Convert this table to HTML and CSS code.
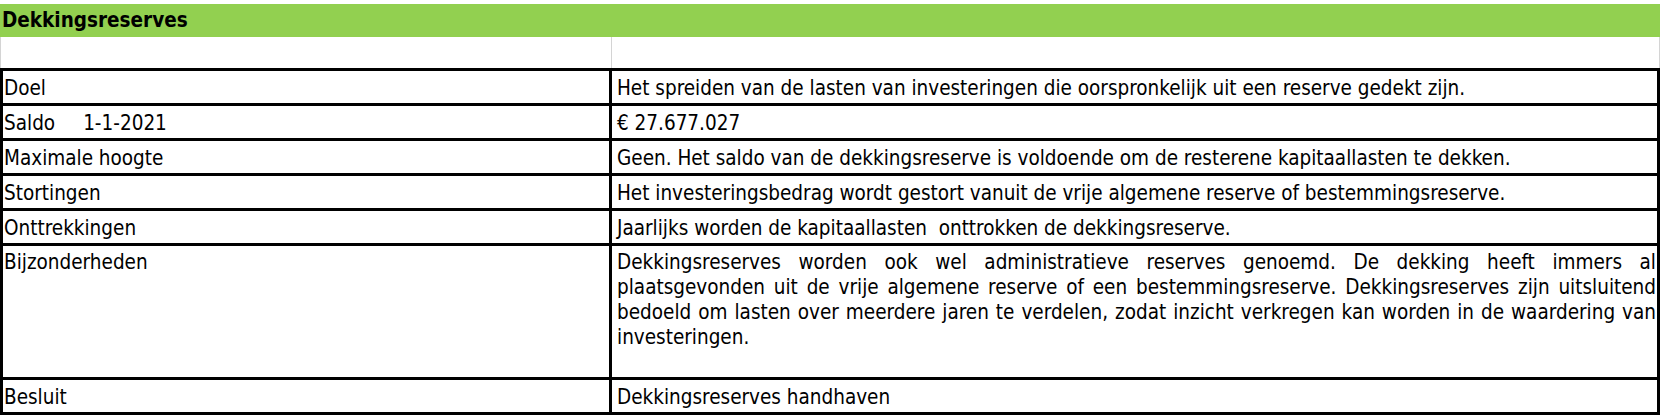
FILE: index.html
```html
<!DOCTYPE html>
<html lang="nl">
<head>
<meta charset="utf-8">
<title>Dekkingsreserves</title>
<link rel="stylesheet" href="styles.css">
</head>
<body>
<div class="sheet">
  <div class="title">Dekkingsreserves</div>
  <div class="spacer">
    <div class="spacer-cell spacer-left"></div>
    <div class="spacer-cell spacer-right"></div>
  </div>
  <table class="info">
    <colgroup>
      <col class="col-label">
      <col class="col-value">
    </colgroup>
    <tbody>
      <tr>
        <td class="label">Doel</td>
        <td class="value">Het spreiden van de lasten van investeringen die oorspronkelijk uit een reserve gedekt zijn.</td>
      </tr>
      <tr>
        <td class="label">Saldo<span class="date">1-1-2021</span></td>
        <td class="value">€ 27.677.027</td>
      </tr>
      <tr>
        <td class="label">Maximale hoogte</td>
        <td class="value">Geen. Het saldo van de dekkingsreserve is voldoende om de resterene kapitaallasten te dekken.</td>
      </tr>
      <tr>
        <td class="label">Stortingen</td>
        <td class="value">Het investeringsbedrag wordt gestort vanuit de vrije algemene reserve of bestemmingsreserve.</td>
      </tr>
      <tr>
        <td class="label">Onttrekkingen</td>
        <td class="value">Jaarlijks worden de kapitaallasten&nbsp; onttrokken de dekkingsreserve.</td>
      </tr>
      <tr class="tall">
        <td class="label">Bijzonderheden</td>
        <td class="value justify">Dekkingsreserves worden ook wel administratieve reserves genoemd. De dekking heeft immers al plaatsgevonden uit de vrije algemene reserve of een bestemmingsreserve. Dekkingsreserves zijn uitsluitend bedoeld om lasten over meerdere jaren te verdelen, zodat inzicht verkregen kan worden in de waardering van investeringen.</td>
      </tr>
      <tr>
        <td class="label">Besluit</td>
        <td class="value">Dekkingsreserves handhaven</td>
      </tr>
    </tbody>
  </table>
</div>
</body>
</html>
```

FILE: styles.css
```css
* {
  box-sizing: border-box;
}

html, body {
  margin: 0;
  padding: 0;
  background: #ffffff;
}

body {
  font-family: "DejaVu Sans Condensed", "DejaVu Sans", Verdana, sans-serif;
  color: #000000;
}

.sheet {
  width: 1662px;
  padding-top: 4px;
}

.title {
  width: 1660px;
  height: 33px;
  background: #92d050;
  font-weight: bold;
  font-size: 20.5px;
  line-height: 33px;
  padding-left: 2px;
}

.spacer {
  display: flex;
  width: 1660px;
  height: 31px;
}

.spacer-cell {
  height: 100%;
}

.spacer-left {
  width: 612px;
  border-left: 1px solid #d4d4d4;
  border-right: 1px solid #d4d4d4;
}

.spacer-right {
  flex: 1;
  border-right: 1px solid #d4d4d4;
}

.info {
  width: 1660px;
  table-layout: fixed;
  border-collapse: separate;
  border-spacing: 0;
  border-top: 3px solid #000;
  border-left: 3px solid #000;
  font-size: 20.5px;
  line-height: 24px;
}

.col-label {
  width: 609px;
}

.col-value {
  width: 1048px;
}

.info td {
  vertical-align: top;
  border-right: 3px solid #000;
  border-bottom: 3px solid #000;
  height: 35px;
  padding: 5px 1px 0 1px;
  white-space: nowrap;
}

.info td.value {
  padding-left: 5px;
}

.info td.justify {
  white-space: normal;
  text-align: justify;
  padding-right: 1px;
  padding-top: 4px;
  line-height: 25px;
}

.info tr.tall td.label {
  padding-top: 4px;
}

.info tr.tall td {
  height: 134px;
}

.date {
  margin-left: 28px;
}
```
